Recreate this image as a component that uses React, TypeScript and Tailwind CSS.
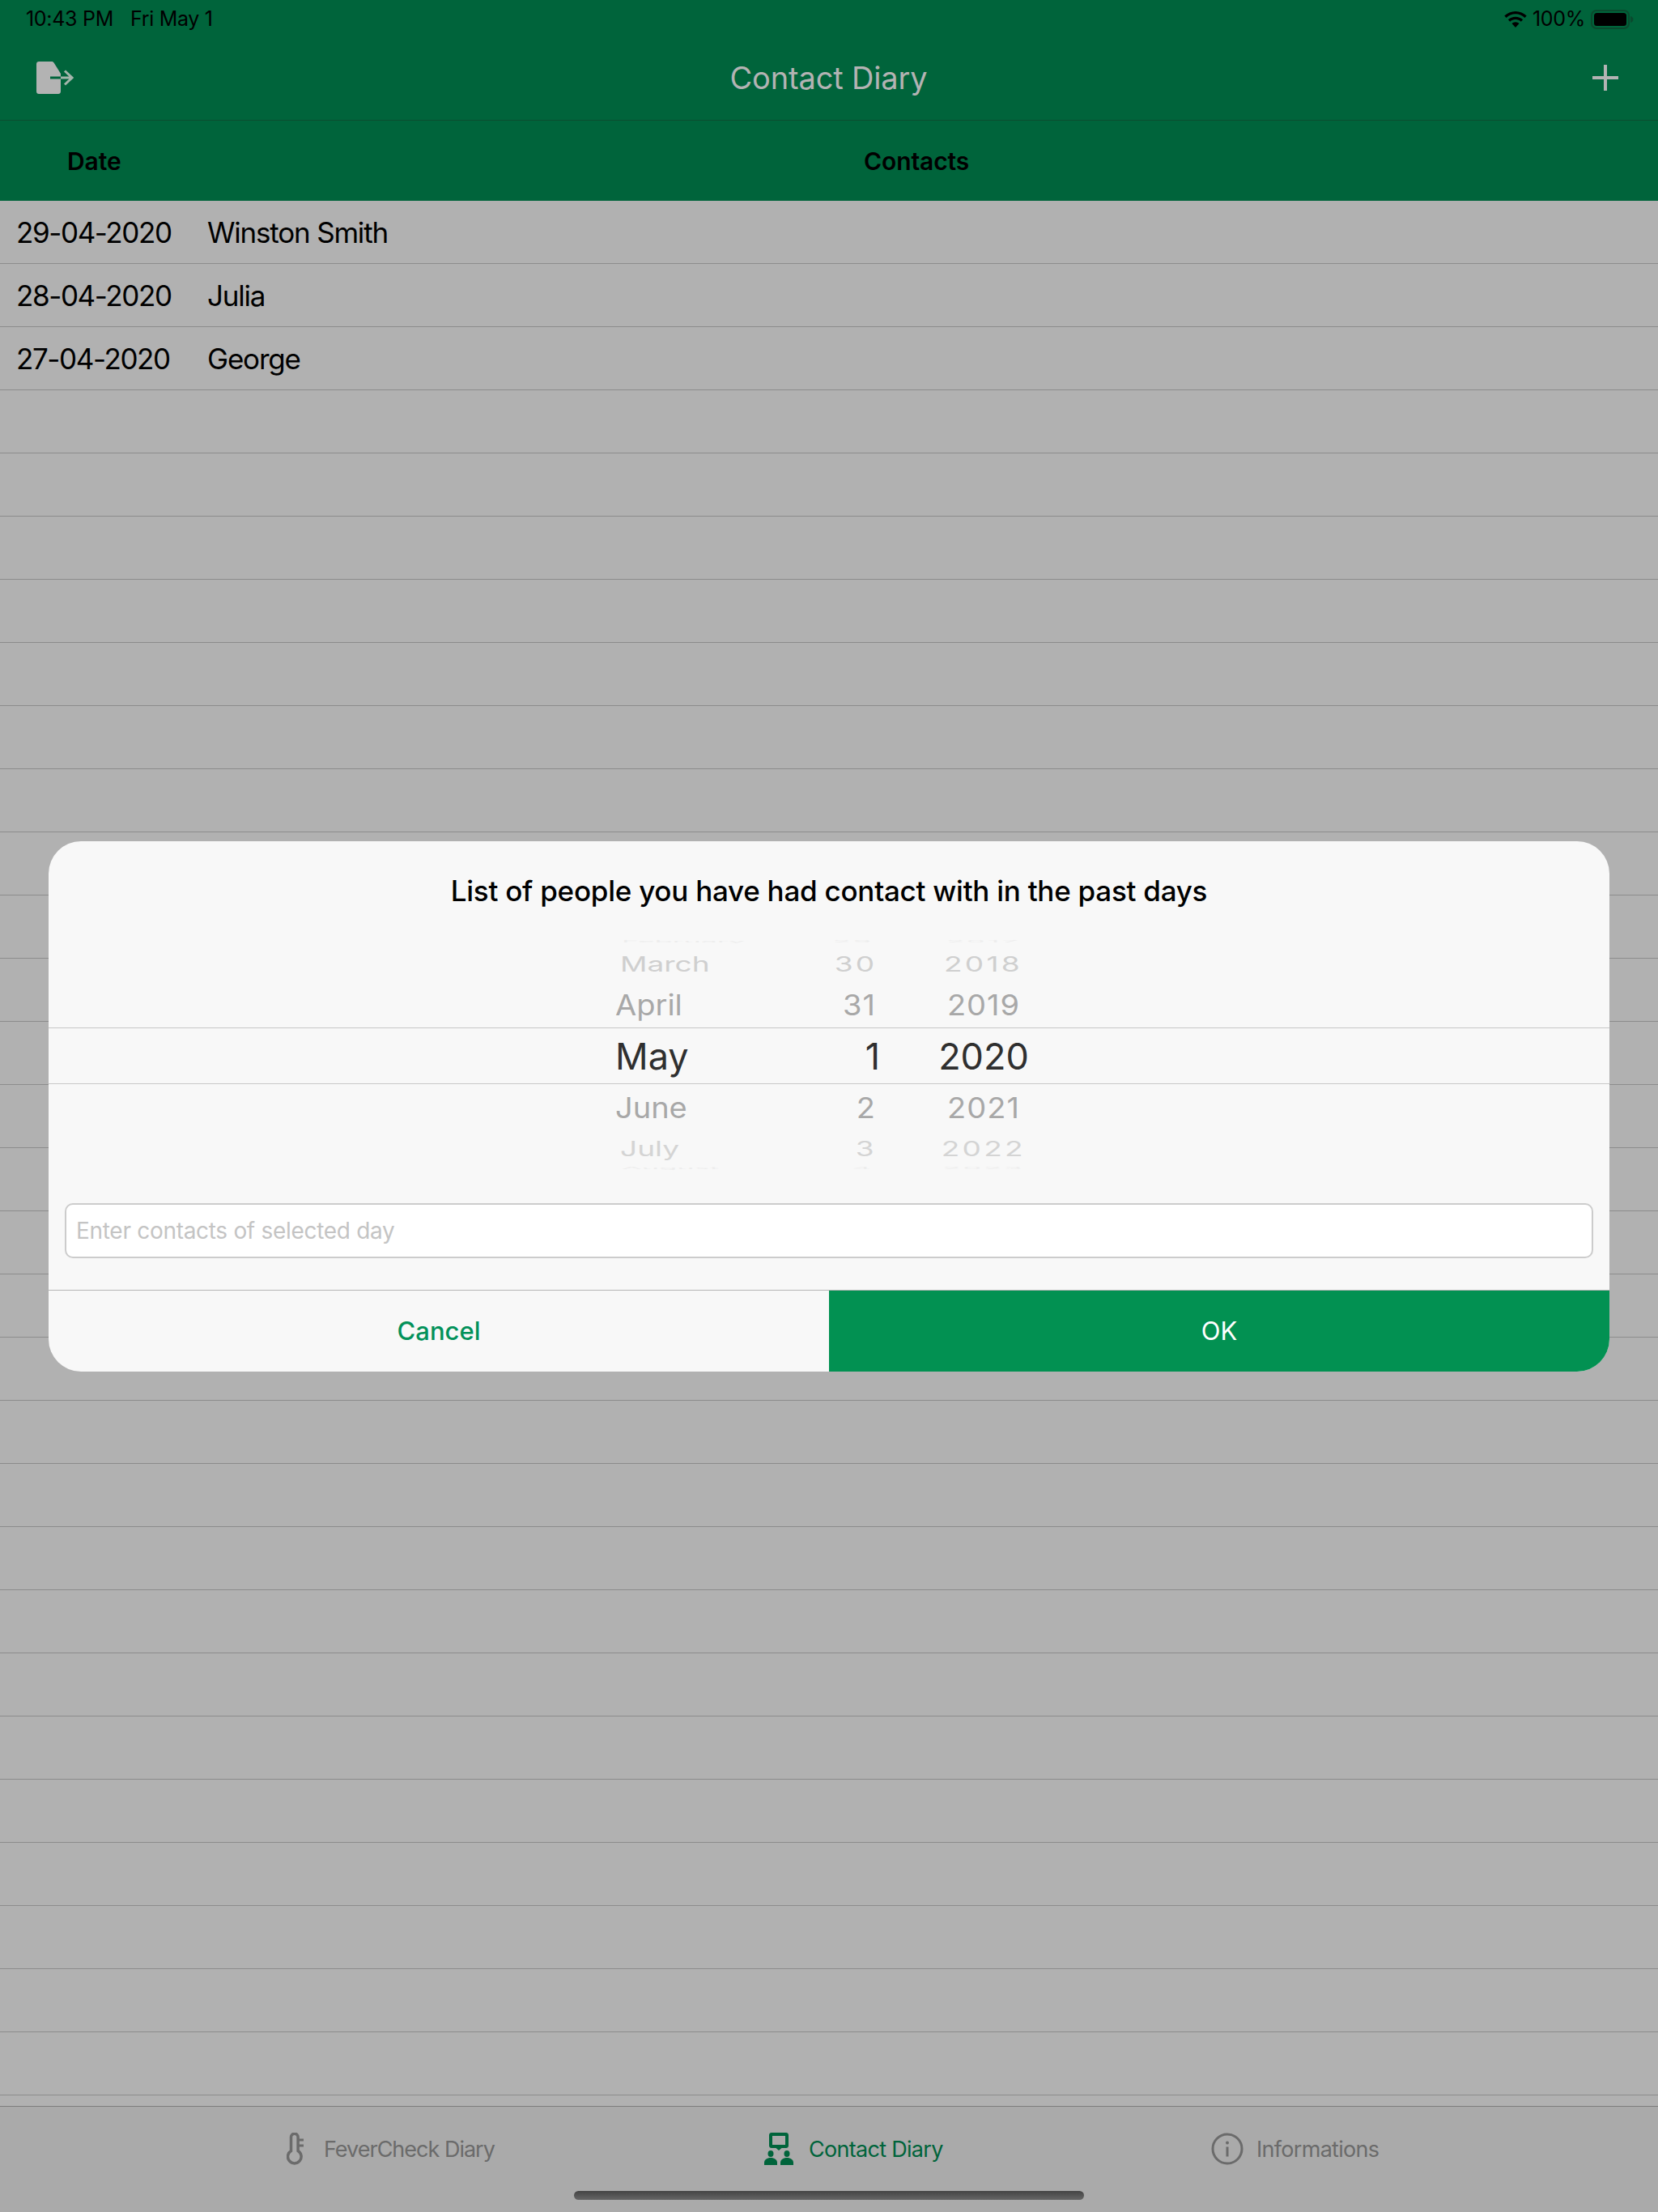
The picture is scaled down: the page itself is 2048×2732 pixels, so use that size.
import React from 'react';

const font = "font-['Inter','Liberation_Sans',sans-serif]";

const contacts = [
  { date: '29-04-2020', name: 'Winston Smith' },
  { date: '28-04-2020', name: 'Julia' },
  { date: '27-04-2020', name: 'George' },
];

const emptyRows = Array.from({ length: 27 });

const sliver = 'text-[#ededed] text-[36px] scale-y-[0.1]';
const far = 'text-[34px] scale-y-[0.75] scale-x-[1.09]';
const near = 'text-[#a8a8a8] text-[38px] scale-y-[0.93]';

const picker = [
  { h: 'h-[26px]', text: sliver, digits: 'tracking-[3px]', ml: 'ml-[8px]', dayMr: 'mr-[8px]', month: 'February', day: '29', year: '2017' },
  { h: 'h-[28px]', text: `text-[#cfcfcf] ${far}`, digits: 'tracking-[3px]', ml: 'ml-[6px]', dayMr: 'mr-[4px]', month: 'March', day: '30', year: '2018' },
  { h: 'h-[74px]', text: near, digits: 'tracking-[1px]', ml: 'ml-0', dayMr: 'mr-[5px]', month: 'April', day: '31', year: '2019' },
  { h: 'h-[54px]', text: 'text-[#2f2f2f] text-[45px]', digits: '', ml: 'ml-0', dayMr: 'mr-0', month: 'May', day: '1', year: '2020' },
  { h: 'h-[72px]', text: near, digits: 'tracking-[1px]', ml: 'ml-0', dayMr: 'mr-[5px]', month: 'June', day: '2', year: '2021' },
  { h: 'h-[28px]', text: `text-[#d4d4d4] ${far}`, digits: 'tracking-[3px]', ml: 'ml-[6px]', dayMr: 'mr-[4px]', month: 'July', day: '3', year: '2022' },
  { h: 'h-[22px]', text: sliver, digits: 'tracking-[3px]', ml: 'ml-[8px]', dayMr: 'mr-[8px]', month: 'August', day: '4', year: '2023' },
];

function ExitIcon() {
  return (
    <svg width="46" height="40" viewBox="0 0 46 40">
      <path d="M3 0h16c1 0 2 .5 2.6 1.6L30 15v22c0 1.700-1.300 3-3 3H3c-1.700 0-3-1.300-3-3V3c0-1.700 1.300-3 3-3z" fill="#b3b3b3" />
      <path d="M17 20h13" stroke="#00643b" strokeWidth="3" />
      <path d="M30 20h14M35 11.500l9 8.500-9 8.500" stroke="#a3b5ab" strokeWidth="3" fill="none" />
    </svg>
  );
}

function PlusIcon() {
  return (
    <svg width="32" height="32" viewBox="0 0 32 32">
      <path d="M16 0v32M0 16h32" stroke="#b3b3b3" strokeWidth="4" />
    </svg>
  );
}

function WifiIcon() {
  return (
    <svg width="28" height="20" viewBox="0 0 28 20" fill="#000">
      <path d="M14 0c5.300 0 10.100 2.100 13.700 5.500l-2.300 2.400C22.400 5.100 18.400 3.300 14 3.300S5.600 5.100 2.600 7.900L.3 5.500C3.900 2.100 8.700 0 14 0z" />
      <path d="M14 6.700c3.500 0 6.700 1.400 9.100 3.600l-2.300 2.400c-1.800-1.700-4.200-2.700-6.800-2.700s-5 1-6.800 2.700l-2.300-2.400c2.400-2.200 5.600-3.600 9.100-3.600z" />
      <path d="M14 13.300c1.700 0 3.300.7 4.500 1.800L14 20l-4.500-4.900c1.200-1.100 2.800-1.800 4.500-1.800z" />
    </svg>
  );
}

function BatteryIcon() {
  return (
    <svg width="53" height="24" viewBox="0 0 53 24">
      <rect x="1" y="1" width="46" height="22" rx="6" fill="none" stroke="#0a4a2e" strokeWidth="2" />
      <rect x="4" y="4" width="40" height="16" rx="3.500" fill="#000" />
      <path d="M49 8c2 .5 3.500 2 3.500 4s-1.500 3.500-3.500 4z" fill="#0a4a2e" />
    </svg>
  );
}

function ThermometerIcon() {
  return (
    <svg width="22" height="40" viewBox="0 0 22 40" fill="none" stroke="#6b6b6b" strokeWidth="3.500">
      <path d="M5.500 22.500V5.500a4.300 4.300 0 0 1 8.600 0v17a8.300 8.300 0 1 1-8.600 0z" />
      <path d="M14 9h7M14 16h7" strokeWidth="3" />
    </svg>
  );
}

function ContactIcon() {
  return (
    <svg width="36" height="40" viewBox="0 0 36 40" fill="#00643b">
      <path fillRule="evenodd" d="M9 0h18c1.700 0 3 1.300 3 3v13c0 1.700-1.300 3-3 3h-5.500L18 22l-3.500-3H9c-1.700 0-3-1.300-3-3V3c0-1.700 1.300-3 3-3zm1 4v11h16V4z" />
      <ellipse cx="8" cy="26" rx="3.500" ry="4" />
      <ellipse cx="28" cy="26" rx="3.500" ry="4" />
      <path d="M0 40v-3c0-3.500 3.500-6 8-6s8 2.500 8 6v3z" />
      <path d="M20 40v-3c0-3.500 3.500-6 8-6s8 2.500 8 6v3z" />
    </svg>
  );
}

function InfoIcon() {
  return (
    <svg width="40" height="40" viewBox="0 0 40 40" fill="none">
      <circle cx="20" cy="20" r="18" stroke="#6b6b6b" strokeWidth="3" />
      <circle cx="20" cy="12.500" r="2" fill="#6b6b6b" />
      <path d="M20 17.500v12" stroke="#6b6b6b" strokeWidth="3" />
    </svg>
  );
}

export default function App() {
  return (
    <div className={`relative w-[2048px] h-[2732px] overflow-hidden bg-[#b1b1b1] ${font}`}>
      {/* Status bar + nav */}
      <header className="h-[248px] bg-[#00643b]">
        <div className="flex h-[149px] flex-col border-b border-[#0b4d30]">
          <div className="flex h-[48px] items-center justify-between pl-[32px] pr-[30px] text-[25px] text-black">
            <div className="flex gap-[21px] tracking-[-0.3px]">
              <span>10:43 PM</span>
              <span>Fri May 1</span>
            </div>
            <div className="flex items-center gap-[7px]">
              <WifiIcon />
              <span className="tracking-[-0.3px]">100%</span>
              <BatteryIcon />
            </div>
          </div>
          <div className="flex h-[100px] items-center justify-between pb-[4px] pl-[45px] pr-[49px]">
            <ExitIcon />
            <span className="ml-[3px] text-[38px] tracking-[-0.15px] text-[#b3b3b3]">Contact Diary</span>
            <div className="flex w-[46px] justify-end">
              <PlusIcon />
            </div>
          </div>
        </div>
        <div className="flex h-[99px] items-center pt-[2px] text-[30px] font-semibold tracking-[-0.1px] text-black">
          <span className="ml-[83px] w-[984px]">Date</span>
          <span>Contacts</span>
        </div>
      </header>

      {/* Table */}
      <div>
        {contacts.map((row) => (
          <div key={row.date} className="flex h-[78px] items-center border-b border-[#8c8c8c] pt-[1px] text-[35px] text-black">
            <span className="ml-[20px] w-[236px] tracking-[-1.4px]">{row.date}</span>
            <span className="tracking-[-1.2px]">{row.name}</span>
          </div>
        ))}
        {emptyRows.map((_, i) => (
          <div key={i} className="h-[78px] border-b border-[#8c8c8c]" />
        ))}
      </div>

      {/* Tab bar */}
      <nav className="absolute inset-x-0 bottom-0 flex h-[131px] border-t border-[#7d7d7d] bg-[#aaaaaa] pl-[354px] pt-[31px] text-[27px] tracking-[-0.7px] text-[#6b6b6b]">
        <div className="flex h-[42px] w-[590px] items-center gap-[24px]">
          <ThermometerIcon />
          <span className="pt-[2px] tracking-[-1px]">FeverCheck Diary</span>
        </div>
        <div className="flex h-[42px] w-[552px] items-center gap-[19px] text-[#00643b]">
          <ContactIcon />
          <span className="pt-[2px]">Contact Diary</span>
        </div>
        <div className="flex h-[42px] items-center gap-[16px]">
          <InfoIcon />
          <span className="pt-[2px]">Informations</span>
        </div>
      </nav>
      <div className="absolute bottom-[15px] left-[709px] h-[11px] w-[630px] rounded-full bg-gradient-to-b from-[#444444] to-[#666666]" />

      {/* Dialog */}
      <div className="absolute left-[60px] top-[1039px] flex h-[655px] w-[1928px] flex-col overflow-hidden rounded-[40px] bg-[#f8f8f8]">
        <div className="flex h-[111px] shrink-0 items-center justify-center pt-[12px] text-[35px] font-medium tracking-[-0.25px] text-black">
          List of people you have had contact with in the past days
        </div>

        <div className="relative flex h-[304px] shrink-0 flex-col">
          {/* selection lines */}
          <div className="absolute inset-x-0 top-[119px] h-[70px] border-y border-[#c8c8c8]" />
          {picker.map((p) => (
            <div key={p.year} className={`relative flex shrink-0 items-center pl-[700px] ${p.h}`}>
              <div className="w-[240px]">
                <span className={`inline-block origin-left ${p.ml} ${p.text}`}>{p.month}</span>
              </div>
              <div className="flex w-[87px] justify-end">
                <span className={`inline-block origin-right ${p.dayMr} ${p.text} ${p.digits}`}>{p.day}</span>
              </div>
              <div className="ml-[48px] w-[160px] text-center">
                <span className={`inline-block ${p.text} ${p.digits}`}>{p.year}</span>
              </div>
            </div>
          ))}
        </div>

        <div className="mt-[32px] px-[20px]">
          <div className="flex h-[68px] items-center rounded-[10px] border-2 border-[#cccccc] bg-white pl-[12px] text-[28px] tracking-[-0.3px] text-[#c4c4c4]">
            Enter contacts of selected day
          </div>
        </div>

        <div className="mt-[39px] flex flex-1 border-t border-[#b5b5b5] text-[31px]">
          <div className="flex flex-1 items-center justify-center font-medium text-[#02915a]">Cancel</div>
          <div className="flex flex-1 items-center justify-center bg-[#029152] text-white">OK</div>
        </div>
      </div>
    </div>
  );
}
